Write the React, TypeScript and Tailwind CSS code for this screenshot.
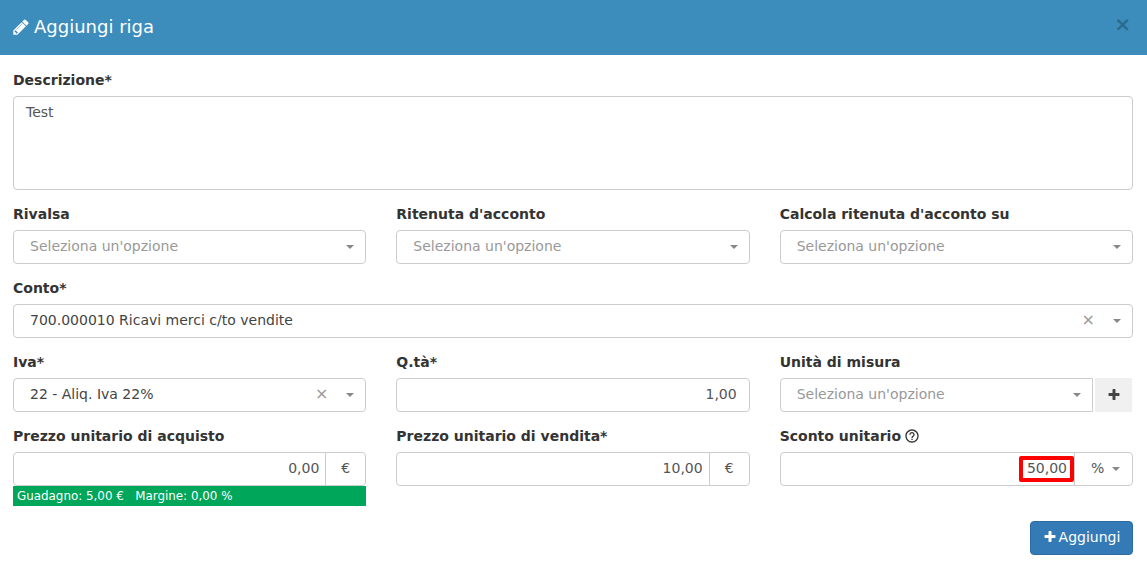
import React from "react";

function PencilIcon({ className = "" }: { className?: string }) {
  return (
    <svg viewBox="0 0 1792 1792" fill="currentColor" className={className}>
      <path d="M491 1536l91-91-235-235-91 91v107h128v128h107zm523-928q0-22-22-22-10 0-17 7l-542 542q-7 7-7 17 0 22 22 22 10 0 17-7l542-542q7-7 7-17zm-54-192l416 416-832 832h-416v-416zm683 96q0 53-37 91l-166 166-416-416 166-165q36-38 91-38 53 0 91 38l235 234q37 39 37 90z" />
    </svg>
  );
}

function PlusIcon({ className = "" }: { className?: string }) {
  return (
    <svg viewBox="0 0 1792 1792" fill="currentColor" className={className}>
      <path d="M1600 736v192q0 40-28 68t-68 28h-416v416q0 40-28 68t-68 28h-192q-40 0-68-28t-28-68v-416h-416q-40 0-68-28t-28-68v-192q0-40 28-68t68-28h416v-416q0-40 28-68t68-28h192q40 0 68 28t28 68v416h416q40 0 68 28t28 68z" />
    </svg>
  );
}

function HelpIcon({ className = "" }: { className?: string }) {
  return (
    <svg viewBox="0 0 24 24" fill="currentColor" className={className}>
      <path d="M11 18h2v-2h-2v2zm1-16C6.48 2 2 6.48 2 12s4.48 10 10 10 10-4.48 10-10S17.52 2 12 2zm0 18c-4.41 0-8-3.59-8-8s3.59-8 8-8 8 3.59 8 8-3.59 8-8 8zm0-14c-2.21 0-4 1.79-4 4h2c0-1.1.9-2 2-2s2 .9 2 2c0 2-3 1.75-3 5h2c0-2.25 3-2.5 3-5 0-2.21-1.79-4-4-4z" />
    </svg>
  );
}

function Label({ children }: { children: React.ReactNode }) {
  return <div className="h-5 mb-1.5 text-sm leading-5 font-bold text-[#333]">{children}</div>;
}

function Caret() {
  return <span className="w-0 h-0 border-x-4 border-x-transparent border-t-4 border-t-[#888]" />;
}

function Select({ value, placeholder, clear, className = "" }: { value?: string; placeholder?: string; clear?: boolean; className?: string }) {
  return (
    <div className={`h-[34px] flex items-center border border-[#ccc] rounded bg-white pl-4 pr-[11px] ${className}`}>
      <span className={`flex-1 text-sm pb-0.5 whitespace-nowrap ${value ? "text-[#444]" : "text-[#999]"}`}>{value ?? placeholder}</span>
      {clear && <span className="text-[#999] text-base leading-none mr-[18px] pb-0.5">×</span>}
      <Caret />
    </div>
  );
}

function Money({ value }: { value: string }) {
  return (
    <div className="h-[34px] flex border border-[#ccc] rounded bg-white text-sm text-[#555]">
      <div className="flex-1 flex items-center justify-end pr-1.5 pb-0.5">{value}</div>
      <div className="w-10 border-l border-[#ccc] flex items-center justify-center pb-0.5">€</div>
    </div>
  );
}

export default function App() {
  return (
    <div className="w-[1147px] h-[569px] bg-white overflow-hidden font-['DejaVu_Sans',sans-serif] text-[#333]">
      <div className="h-[55px] bg-[#3c8dbc] flex items-center justify-between pl-[13px] pr-[16px]">
        <div className="flex items-center gap-1 -ml-px text-white text-lg pb-0.5">
          <PencilIcon className="w-[18px] h-[18px]" />
          <span>Aggiungi riga</span>
        </div>
        <span className="text-[20px] font-bold leading-none text-[#2a6a8f] -mt-2">×</span>
      </div>

      <div className="px-[13px] w-[1146px] pt-[15px]">
        <Label>Descrizione*</Label>
        <div className="h-[94px] border border-[#ccc] rounded px-3 py-[5px] text-sm leading-5 text-[#555]">Test</div>

        <div className="grid grid-cols-3 gap-x-[30px] gap-y-3.5 mt-3.5">
          <div>
            <Label>Rivalsa</Label>
            <Select placeholder="Seleziona un'opzione" />
          </div>
          <div>
            <Label>Ritenuta d'acconto</Label>
            <Select placeholder="Seleziona un'opzione" />
          </div>
          <div>
            <Label>Calcola ritenuta d'acconto su</Label>
            <Select placeholder="Seleziona un'opzione" />
          </div>

          <div className="col-span-3">
            <Label>Conto*</Label>
            <Select value="700.000010 Ricavi merci c/to vendite" clear />
          </div>

          <div>
            <Label>Iva*</Label>
            <Select value="22 - Aliq. Iva 22%" clear />
          </div>
          <div>
            <Label>Q.tà*</Label>
            <div className="h-[34px] border border-[#ccc] rounded flex items-center justify-end px-3 pb-0.5 text-sm text-[#555]">1,00</div>
          </div>
          <div>
            <Label>Unità di misura</Label>
            <div className="flex">
              <Select placeholder="Seleziona un'opzione" className="flex-1 rounded-r-none" />
              <div className="w-[37px] ml-0.5 mr-px h-[34px] bg-[#f0f0f0] flex items-center justify-center text-[#444]">
                <PlusIcon className="w-[14px] h-[14px]" />
              </div>
            </div>
          </div>

          <div>
            <Label>Prezzo unitario di acquisto</Label>
            <Money value="0,00" />
            <div className="h-5 bg-[#00a65a] text-white text-[11.9px] leading-5 pl-1 whitespace-pre">Guadagno: 5,00 €   Margine: 0,00 %</div>
          </div>
          <div>
            <Label>Prezzo unitario di vendita*</Label>
            <Money value="10,00" />
          </div>
          <div>
            <Label>
              <span className="inline-flex items-center gap-[3px]">
                Sconto unitario <HelpIcon className="w-4 h-4 text-[#333]" />
              </span>
            </Label>
            <div className="h-[34px] flex border border-[#ccc] rounded text-sm text-[#555]">
              <div className="flex-1 flex items-center justify-end">
                <span className="h-[26px] w-[55px] border-4 border-[#f00] rounded-[2px] flex items-center justify-end pr-[3px] pb-0.5">50,00</span>
              </div>
              <div className="w-[58px] border-l border-[#ccc] flex items-center justify-between pl-4 pr-3">
                <span className="pb-0.5">%</span>
                <Caret />
              </div>
            </div>
          </div>
        </div>

        <div className="flex justify-end mt-[15px]">
          <button className="h-[34px] w-[103px] bg-[#337ab7] border border-[#2e6da4] rounded text-white text-sm flex items-center justify-center gap-0.5 pb-0.5">
            <PlusIcon className="w-[14px] h-[14px]" />
            Aggiungi
          </button>
        </div>
      </div>
    </div>
  );
}
